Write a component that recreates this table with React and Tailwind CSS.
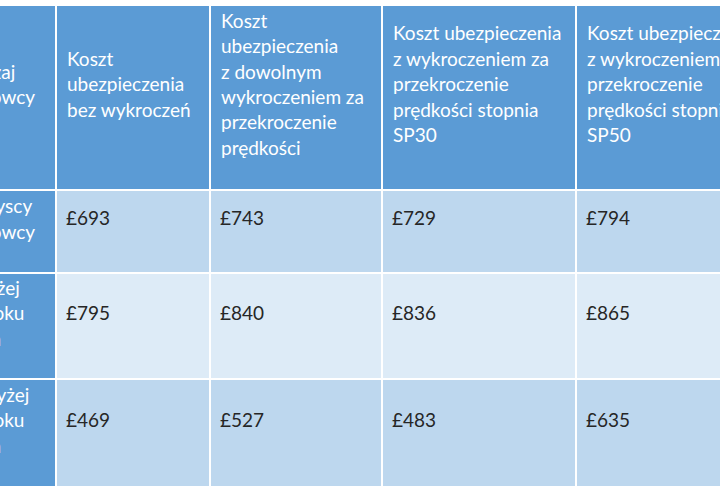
import React from "react";

const header = [
  ["Rodzaj", "kierowcy"],
  ["Koszt", "ubezpieczenia", "bez wykroczeń"],
  ["Koszt", "ubezpieczenia", "z dowolnym", "wykroczeniem za", "przekroczenie", "prędkości"],
  ["Koszt ubezpieczenia", "z wykroczeniem za", "przekroczenie", "prędkości stopnia", "SP30"],
  ["Koszt ubezpieczenia", "z wykroczeniem za", "przekroczenie", "prędkości stopnia", "SP50"],
];

const rows = [
  { label: ["Wszyscy", "kierowcy"], values: ["£693", "£743", "£729", "£794"], bg: "bg-[#bdd7ee]", h: "h-[81px]" },
  { label: ["Poniżej", "25 roku", "życia"], values: ["£795", "£840", "£836", "£865"], bg: "bg-[#ddebf7]", h: "h-[104px]" },
  { label: ["Powyżej", "25 roku", "życia"], values: ["£469", "£527", "£483", "£635"], bg: "bg-[#bdd7ee]", h: "h-[106px]" },
];

function Lines({ lines }) {
  return (
    <div className="flex flex-col">
      {lines.map((l, i) => (
        <span key={i} className="block whitespace-nowrap">
          {l}
        </span>
      ))}
    </div>
  );
}

export default function App() {
  return (
    <div className="w-[720px] h-[500px] bg-white overflow-hidden pt-[6px]">
      <div
        className="ml-[-50px] grid grid-cols-[105px_152px_170px_192px_220px] gap-[2px] text-[19px] leading-[25.4px]"
        style={{ fontFamily: "Lato, 'Open Sans', sans-serif" }}
      >
        {header.map((lines, i) => (
          <div
            key={i}
            className="h-[183px] bg-[#5b9bd5] text-white pl-[10px] pt-[1px] pb-[28px] flex flex-col justify-center overflow-hidden"
          >
            <Lines lines={lines} />
          </div>
        ))}
        {rows.map((r, ri) => (
          <React.Fragment key={ri}>
            <div className={`${r.h} bg-[#5b9bd5] text-white pl-[10px] pt-[2px] pb-[28px] flex flex-col justify-center`}>
              <Lines lines={r.label} />
            </div>
            {r.values.map((v, vi) => (
              <div
                key={vi}
                className={`${r.h} ${r.bg} text-[#262626] pl-[9px] pt-[2px] pb-[29px] flex flex-col justify-center`}
              >
                <span className="whitespace-nowrap">{v}</span>
              </div>
            ))}
          </React.Fragment>
        ))}
      </div>
    </div>
  );
}
